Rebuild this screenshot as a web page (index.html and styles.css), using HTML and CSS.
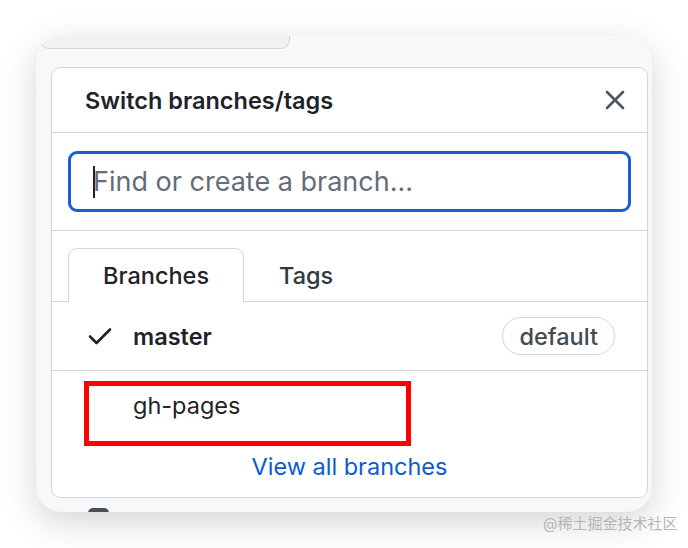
FILE: index.html
```html
<!DOCTYPE html>
<html lang="en">
<head>
  <meta charset="UTF-8" />
  <title>Switch branches/tags</title>
  <link rel="stylesheet" href="styles.css">
</head>
<body>

<div class="shot">
  <div class="window">
    <div class="page-btn"></div>

    <div class="menu">
      <div class="menu-header">
        <span class="menu-title">Switch branches/tags</span>
        <button class="menu-close">
          <svg width="20" height="20" viewBox="0 0 20 20"><path d="M2 2 L18 18 M18 2 L2 18" stroke="#4f565e" stroke-width="2.6" stroke-linecap="round"/></svg>
        </button>
      </div>

      <div class="menu-filter">
        <div class="filter-input">
          <span class="caret"></span>
          <span class="placeholder">Find or create a branch...</span>
        </div>
      </div>

      <div class="tabs">
        <span class="tab selected">Branches</span>
        <span class="tab">Tags</span>
      </div>

      <div class="item">
        <span class="item-icon">
          <svg width="24" height="20" viewBox="0 0 24 20"><path d="M2 10.5 L8.5 17 L22 3.5" fill="none" stroke="#1f2328" stroke-width="2.6" stroke-linecap="round" stroke-linejoin="round"/></svg>
        </span>
        <span class="item-name current">master</span>
        <span class="item-label">default</span>
      </div>

      <div class="item last">
        <span class="item-icon"></span>
        <span class="item-name">gh-pages</span>
        <span class="highlight"></span>
      </div>

      <div class="menu-footer">
        <a href="#">View all branches</a>
      </div>
    </div>

    <div class="page-below"><span class="page-icon"></span></div>
  </div>
  <div class="watermark">@稀土掘金技术社区</div>
</div>

</body>
</html>
```

FILE: styles.css
```css
html, body {
  margin: 0;
  background: #fff;
  font-family: 'Inter', 'Noto Sans CJK SC', sans-serif;
  color: #1f2328;
}
.shot {
  position: relative;
  width: 688px;
  height: 548px;
  padding: 36px 0 0 36px;
  box-sizing: border-box;
}
.window {
  width: 616px;
  height: 476px;
  border-radius: 26px;
  background: #f7f8f9;
  box-shadow: 0 10px 34px rgba(0,0,0,0.17);
  overflow: hidden;
}
.page-btn {
  width: 248px;
  height: 12px;
  margin-left: 4px;
  background: #eff1f3;
  border: 1px solid #d0d7de;
  border-top: none;
  border-radius: 0 0 9px 9px;
}
.menu {
  margin: 18px 4px 0 15px;
  height: 431px;
  box-sizing: border-box;
  background: #fff;
  border: 1px solid #d0d7de;
  border-radius: 9px;
  position: relative;
}
.menu-header {
  display: flex;
  align-items: center;
  justify-content: space-between;
  height: 64px;
  padding: 0 22px 0 33px;
  border-bottom: 1px solid #d0d7de;
}
.menu-title {
  font-size: 23.5px;
  font-weight: 600;
}
.menu-close {
  background: none;
  border: none;
  padding: 0;
  display: flex;
}
.menu-filter {
  padding: 18px 16px;
  border-bottom: 1px solid #d0d7de;
}
.filter-input {
  display: flex;
  align-items: center;
  height: 61px;
  box-sizing: border-box;
  padding-left: 22px;
  border: 3px solid #1a5fd0;
  border-radius: 9px;
}
.caret {
  width: 2px;
  height: 32px;
  background: #1f2328;
  margin-right: -2px;
}
.placeholder {
  font-size: 27px;
  color: #656d76;
}
.tabs {
  display: flex;
  padding: 17px 16px 0;
  border-bottom: 1px solid #d0d7de;
}
.tab {
  height: 53px;
  box-sizing: border-box;
  display: flex;
  align-items: center;
  padding: 0 34px;
  font-size: 23.5px;
  font-weight: 500;
  color: #32383f;
  border: 1px solid transparent;
  border-bottom: none;
  margin-bottom: -1px;
}
.tab.selected {
  color: #1f2328;
  background: #fff;
  border-color: #d0d7de;
  border-radius: 9px 9px 0 0;
  height: 54px;
}
.item {
  position: relative;
  display: flex;
  align-items: center;
  height: 68px;
  padding: 0 32px 0 36px;
  border-bottom: 1px solid #d0d7de;
  font-size: 23.5px;
}
.item.last { border-bottom: none; }
.item-icon {
  width: 45px;
  display: flex;
}
.item-name { flex: 1; }
.item-name.current { font-weight: 600; }
.item-label {
  height: 38px;
  box-sizing: border-box;
  display: flex;
  align-items: center;
  padding: 0 16px;
  border: 1.5px solid #d0d7de;
  border-radius: 20px;
  color: #424a53;
  font-weight: 500;
}
.highlight {
  position: absolute;
  left: 32px;
  top: 10px;
  width: 327px;
  height: 65px;
  box-sizing: border-box;
  border: 5px solid #f00;
}
.menu-footer {
  text-align: center;
  padding-top: 13px;
  font-size: 23.5px;
}
.menu-footer a {
  color: #0b5ccf;
  text-decoration: none;
}
.page-below {
  padding: 10px 0 0 52px;
}
.page-icon {
  display: block;
  width: 21px;
  height: 10px;
  background: #4a4f55;
  border-radius: 5px;
}
.watermark {
  position: absolute;
  left: 543px;
  top: 512px;
  font-size: 15px;
  color: #b4b6b9;
}
```
